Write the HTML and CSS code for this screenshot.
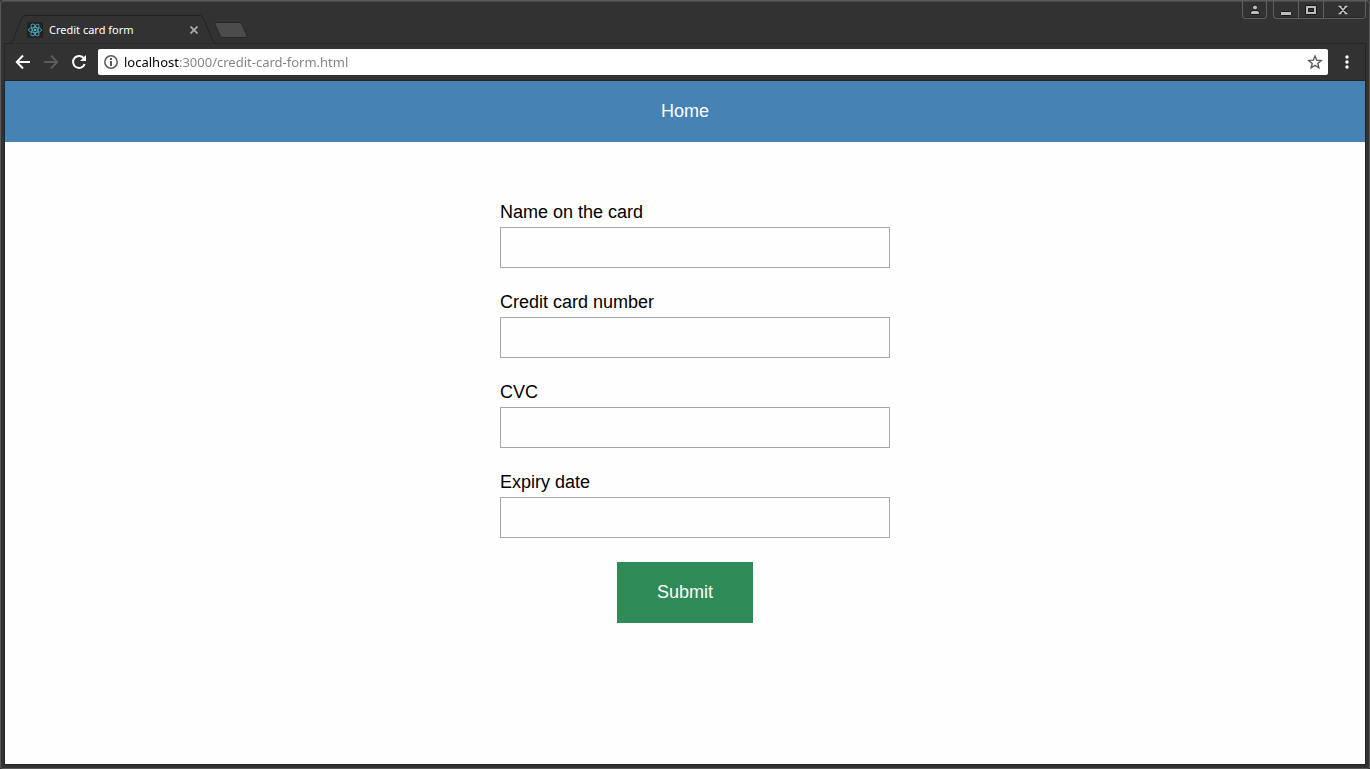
FILE: index.html
```html
<!DOCTYPE html>
<html lang="en">
<head>
  <meta charset="UTF-8" />
  <meta name="viewport" content="width=device-width, initial-scale=1.0"/>
  <title>Credit card form</title>
  <link rel="stylesheet" href="styles.css">
</head>
<body>
  <div class="window">

    <div class="tab-strip">
      <div class="tab">
        <svg class="tab-shape" width="206" height="29" viewBox="0 0 206 29">
          <path d="M0 28.5Q1.500 28.5 2.500 26L11.500 3.500Q12.500.500 15 .5H190Q192.500.500 193.500 3.500L202.500 25Q204 28.500 206 28.500" fill="#323232"/>
          <path d="M0 28.5Q1.500 28.5 2.500 26L11.500 3.500Q12.500.500 15 .5H190Q192.500.500 193.500 3.500L202.500 25Q204 28.500 206 28.500" fill="none" stroke="#222"/>
        </svg>
        <svg class="favicon" width="16" height="16" viewBox="0 0 16 16">
          <rect width="16" height="16" rx="1" fill="#222"/>
          <g fill="none" stroke="#4ba6bb" stroke-width="0.9">
            <ellipse cx="8" cy="8" rx="6.600" ry="2.500"/>
            <ellipse cx="8" cy="8" rx="6.600" ry="2.500" transform="rotate(60 8 8)"/>
            <ellipse cx="8" cy="8" rx="6.600" ry="2.500" transform="rotate(120 8 8)"/>
          </g>
          <circle cx="8" cy="8" r="1.300" fill="#53b9d1"/>
        </svg>
        <span class="tab-title">Credit card form</span>
        <button class="tab-close" type="button" aria-label="Close tab">
          <svg width="8" height="8" viewBox="0 0 8 8"><path d="M.5.5l7 7M7.500.500l-7 7" stroke="#aaa" stroke-width="1.800"/></svg>
        </button>
      </div>
      <button class="new-tab" type="button" aria-label="New tab">
        <svg width="34" height="16" viewBox="0 0 34 16"><path d="M2 .5H25Q27 .5 28 2.500L33 13.500Q33.500 15.500 32 15.500H9Q7 15.500 6 13.500L1 2.500Q.5.500 2 .5Z" fill="#4c4c4c" stroke="#262626"/></svg>
      </button>

      <div class="window-buttons">
        <button class="window-btn user" type="button" aria-label="User">
          <svg width="12" height="12" viewBox="0 0 12 12"><g fill="#bbb" stroke="#181818"><path d="M1.500 10.500V9Q1.500 6.500 4 6.500H8Q10.500 6.500 10.500 9V10.500Z"/><circle cx="6" cy="3.500" r="2.500"/></g></svg>
        </button>
        <div class="window-group">
          <button class="window-btn minimize" type="button" aria-label="Minimize">
            <svg width="12" height="12" viewBox="0 0 12 12"><rect x=".5" y="7.500" width="11" height="4" rx="1" fill="#bbb" stroke="#181818"/></svg>
          </button>
          <button class="window-btn maximize" type="button" aria-label="Maximize">
            <svg width="12" height="12" viewBox="0 0 12 12"><path fill-rule="evenodd" d="M.5 1.500H11.500V10.500H.5ZM3.500 4.500V7.500H8.500V4.500Z" fill="#bbb" stroke="#181818"/></svg>
          </button>
          <button class="window-btn close" type="button" aria-label="Close">
            <svg width="12" height="12" viewBox="0 0 12 12"><path d="M2.500 2L9.500 10M9.500 2L2.500 10" stroke="#181818" stroke-width="4"/><path d="M2.500 2L9.500 10M9.500 2L2.500 10M1.500 2.500H4.500M7.500 2.500H10.500M1.500 9.500H4.500M7.500 9.500H10.500" stroke="#c4c4c4" stroke-width="1.600"/></svg>
          </button>
        </div>
      </div>
    </div>

    <div class="toolbar">
      <button class="nav-btn" type="button" aria-label="Back">
        <svg width="16" height="16" viewBox="0 0 16 16"><path d="M15 8H2M8 1.500L1.800 8L8 14.500" fill="none" stroke="#fff" stroke-width="2"/></svg>
      </button>
      <button class="nav-btn" type="button" aria-label="Forward" disabled>
        <svg width="16" height="16" viewBox="0 0 16 16"><path d="M1 8H14M8 1.500L14.200 8L8 14.500" fill="none" stroke="#5b5b5b" stroke-width="2"/></svg>
      </button>
      <button class="nav-btn" type="button" aria-label="Reload">
        <svg width="16" height="16" viewBox="0 0 16 16"><path d="M13 4.500A6 6 0 1 0 13.700 10" fill="none" stroke="#fff" stroke-width="2"/><path d="M15 1V7H9Z" fill="#fff"/></svg>
      </button>
      <div class="address-bar">
        <svg width="14" height="14" viewBox="0 0 14 14"><circle cx="7" cy="7" r="6.200" fill="none" stroke="#5a5a5a" stroke-width="1.500"/><path d="M7 6V11M7 3V5" stroke="#5a5a5a" stroke-width="2"/></svg>
        <input class="address" type="text" aria-label="Address" value="localhost:3000/credit-card-form.html" />
        <button class="bookmark" type="button" aria-label="Bookmark this page">
          <svg width="16" height="16" viewBox="0 0 16 16"><path d="M8 2L9.700 6.200L14.300 6.500L10.800 9.400L11.900 13.800L8 11.400L4.100 13.800L5.200 9.400L1.700 6.500L6.300 6.200Z" fill="none" stroke="#5a5a5a" stroke-width="1.400"/></svg>
        </button>
      </div>
      <button class="nav-btn" type="button" aria-label="Menu">
        <svg width="4" height="14" viewBox="0 0 4 14"><g fill="#fff"><circle cx="2" cy="2" r="1.700"/><circle cx="2" cy="7" r="1.700"/><circle cx="2" cy="12" r="1.700"/></g></svg>
      </button>
    </div>

    <div class="page">
      <nav class="navbar">
        <a href="#">Home</a>
      </nav>

      <form class="card-form">
        <div class="field">
          <label for="name">Name on the card</label>
          <input type="text" id="name" />
        </div>
        <div class="field">
          <label for="number">Credit card number</label>
          <input type="text" id="number" />
        </div>
        <div class="field">
          <label for="cvc">CVC</label>
          <input type="text" id="cvc" />
        </div>
        <div class="field">
          <label for="expiry">Expiry date</label>
          <input type="text" id="expiry" />
        </div>
        <button class="submit-btn" type="submit">Submit</button>
      </form>
    </div>

  </div>
</body>
</html>
```
FILE: styles.css
```css
body {
  margin: 0;
  background: #323232;
}
button {
  padding: 0;
  border: none;
  background: none;
}
svg {
  display: block;
  flex: none;
}

/* Browser window */
.window {
  display: flex;
  flex-direction: column;
  box-sizing: border-box;
  min-height: 100vh;
  padding: 0 3px 3px;
  border: 1px solid #5a5a5a;
  border-radius: 3px;
  box-shadow: inset 0 1px #484848;
  background: #323232;
}
.tab-strip {
  display: flex;
  align-items: flex-start;
  height: 42px;
}
.tab {
  position: relative;
  display: flex;
  align-items: center;
  box-sizing: border-box;
  width: 206px;
  height: 29px;
  margin: 14px 0 0 6px;
  padding: 0 18px 0 17px;
}
.tab-shape {
  position: absolute;
  top: 0;
  left: 0;
}
.favicon {
  position: relative;
}
.tab-title {
  position: relative;
  flex: 1;
  margin-left: 6px;
  font: 11px/16px "Noto Sans", sans-serif;
  color: #fff;
  white-space: nowrap;
}
.tab-close {
  position: relative;
}
.new-tab {
  margin: 21px 0 0 -2px;
}
.window-buttons {
  display: flex;
  gap: 6px;
  margin: 0 0 0 auto;
}
.window-group {
  display: flex;
}
.window-btn {
  display: flex;
  justify-content: center;
  align-items: center;
  box-sizing: border-box;
  width: 25px;
  height: 18px;
  border: 1px solid #5f5f5f;
  border-top: none;
  box-shadow: inset 0 -1px #282828;
}
.window-btn.user {
  border-radius: 0 0 4px 4px;
}
.window-btn.minimize {
  border-right: none;
  border-radius: 0 0 0 4px;
}
.window-btn.maximize {
  border-right: none;
}
.window-btn.close {
  width: 43px;
  padding-right: 3px;
  border-radius: 0 0 4px 0;
}

.toolbar {
  display: flex;
  align-items: center;
  box-sizing: border-box;
  height: 38px;
  padding: 0 4px;
  border: 1px solid #242424;
}
.nav-btn {
  display: flex;
  justify-content: center;
  align-items: center;
  width: 28px;
  height: 28px;
}
.address-bar {
  display: flex;
  flex: 1;
  align-items: center;
  height: 26px;
  margin: 0 5px;
  padding: 0 5px 0 6px;
  border-radius: 2px;
  background: #fff;
}
/* host part is darker than the rest of the address */
.address {
  flex: 1;
  min-width: 0;
  margin-left: 6px;
  padding: 0;
  border: none;
  outline: none;
  font: 13px/20px "Noto Sans", sans-serif;
  color: transparent;
  background: linear-gradient(to right, #000 55px, #808080 55px);
  -webkit-background-clip: text;
  background-clip: text;
}

/* Page */
.page {
  flex: 1;
  border: 1px solid #242424;
  border-top: none;
  background: #fefefe;
  font: 18px/21px "Liberation Sans", Arial, sans-serif;
}
.navbar {
  padding: 20px;
  background: #4682b4;
  text-align: center;
}
.navbar a {
  display: block;
  color: #fff;
  text-decoration: none;
}
.card-form {
  width: 370px;
  margin: 60px auto;
}
.field {
  margin-bottom: 24px;
}
.field label {
  display: block;
  margin-bottom: 4px;
  color: #000;
}
.field input {
  display: block;
  width: 100%;
  height: 21px;
  padding: 9px;
  border: 1px solid #a9a9a9;
  background: #fefefe;
  font: inherit;
}
.submit-btn {
  display: block;
  margin: 0 auto;
  padding: 20px 40px;
  background: #2e8b57;
  color: #fff;
  font: inherit;
  cursor: pointer;
}
```
